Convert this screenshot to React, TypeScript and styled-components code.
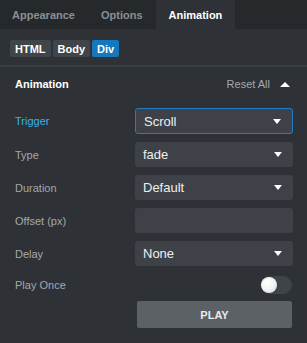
import { useState } from "react";
import styled, { createGlobalStyle } from "styled-components";

const GlobalStyle = createGlobalStyle`
  html, body {
    margin: 0;
    padding: 0;
    background: #2e3236;
  }
  body {
    font-family: "Liberation Sans", Arial, sans-serif;
    width: 307px;
    height: 343px;
    overflow: hidden;
  }
`;

const Panel = styled.div`
  width: 307px;
  height: 343px;
  background: #2e3236;
  color: #e8eaec;
`;

const TabBar = styled.div`
  display: flex;
  height: 29px;
  background: #25292c;
  padding-left: 0;
`;

const Tab = styled.div<{ $active?: boolean }>`
  display: flex;
  align-items: center;
  padding: 0 13px;
  font-size: 11px;
  font-weight: bold;
  color: ${(p) => (p.$active ? "#ffffff" : "#8a8f94")};
  background: ${(p) => (p.$active ? "#2e3236" : "transparent")};
  &:first-child {
    padding-left: 12px;
  }
`;

const Crumbs = styled.div`
  display: flex;
  gap: 2px;
  padding: 11px 10px 0;
  height: 17px;
`;

const Crumb = styled.span<{ $active?: boolean }>`
  display: flex;
  align-items: center;
  padding: 0 5px;
  height: 17px;
  border-radius: 2px;
  font-size: 11px;
  font-weight: bold;
  color: #ffffff;
  background: ${(p) => (p.$active ? "#1577bd" : "#40454a")};
`;

const Divider = styled.div`
  margin-top: 8px;
  height: 2px;
  background: #383d42;
`;

const Section = styled.div`
  padding: 0 14px 0 15px;
`;

const Header = styled.div`
  display: flex;
  align-items: center;
  justify-content: space-between;
  height: 20px;
  margin-top: 7px;
`;

const HeaderTitle = styled.span`
  font-size: 11px;
  font-weight: bold;
  color: #ffffff;
`;

const ResetGroup = styled.div`
  display: flex;
  align-items: center;
  gap: 10px;
  padding-right: 3px;
  font-size: 11px;
  color: #a3a8ad;
`;

const UpArrow = styled.span`
  width: 0;
  height: 0;
  border-left: 5px solid transparent;
  border-right: 5px solid transparent;
  border-bottom: 5px solid #ffffff;
`;

const Rows = styled.div`
  display: flex;
  flex-direction: column;
  gap: 8px;
  margin-top: 14px;
`;

const Row = styled.div`
  display: grid;
  grid-template-columns: 120px 158px;
  align-items: center;
  min-height: 25px;
`;

const Label = styled.label<{ $focus?: boolean }>`
  font-size: 11px;
  color: ${(p) => (p.$focus ? "#38b3e8" : "#a3a8ad")};
`;

const Field = styled.div<{ $focus?: boolean }>`
  box-sizing: border-box;
  display: flex;
  align-items: center;
  justify-content: space-between;
  height: ${(p) => (p.$focus ? "26px" : "25px")};
  padding: 0 11px 0 8px;
  border-radius: 3px;
  background: #3e4248;
  border: ${(p) => (p.$focus ? "1px solid #1e7fc2" : "none")};
  font-size: 13px;
  color: #eceff1;
`;

const DownArrow = styled.span`
  width: 0;
  height: 0;
  border-left: 4px solid transparent;
  border-right: 4px solid transparent;
  border-top: 5px solid #ffffff;
`;

const ToggleRow = styled.div`
  display: grid;
  grid-template-columns: 1fr auto;
  align-items: center;
  height: 18px;
  margin-top: 10px;
  padding-right: 1px;
`;

const Track = styled.div<{ $on: boolean }>`
  position: relative;
  width: 31px;
  height: 18px;
  border-radius: 9px;
  background: ${(p) => (p.$on ? "#1577bd" : "#3f4449")};
  cursor: pointer;
`;

const Knob = styled.span<{ $on: boolean }>`
  position: absolute;
  top: 1px;
  left: ${(p) => (p.$on ? "14px" : "0px")};
  width: 16px;
  height: 16px;
  border-radius: 50%;
  background: radial-gradient(circle at 40% 35%, #ffffff 0%, #f2f2f2 50%, #d4d4d4 100%);
`;

const PlayWrap = styled.div`
  display: flex;
  justify-content: flex-end;
  margin-top: 7px;
  padding-right: 1px;
`;

const PlayButton = styled.button`
  width: 155px;
  height: 27px;
  border: none;
  border-radius: 2px;
  background: #5c6166;
  color: #e8eaec;
  font-family: "Liberation Sans", Arial, sans-serif;
  font-size: 11px;
  font-weight: bold;
  cursor: pointer;
`;

const fields = [
  { label: "Trigger", value: "Scroll", focus: true, select: true },
  { label: "Type", value: "fade", select: true },
  { label: "Duration", value: "Default", select: true },
  { label: "Offset (px)", value: "", select: false },
  { label: "Delay", value: "None", select: true },
];

export default function App() {
  const [playOnce, setPlayOnce] = useState(false);

  return (
    <Panel>
      <GlobalStyle />
      <TabBar>
        <Tab>Appearance</Tab>
        <Tab>Options</Tab>
        <Tab $active>Animation</Tab>
      </TabBar>

      <Crumbs>
        <Crumb>HTML</Crumb>
        <Crumb>Body</Crumb>
        <Crumb $active>Div</Crumb>
      </Crumbs>

      <Divider />

      <Section>
        <Header>
          <HeaderTitle>Animation</HeaderTitle>
          <ResetGroup>
            Reset All
            <UpArrow />
          </ResetGroup>
        </Header>

        <Rows>
          {fields.map((f) => (
            <Row key={f.label}>
              <Label $focus={f.focus}>{f.label}</Label>
              <Field $focus={f.focus}>
                <span>{f.value}</span>
                {f.select && <DownArrow />}
              </Field>
            </Row>
          ))}
        </Rows>

        <ToggleRow>
          <Label>Play Once</Label>
          <Track $on={playOnce} onClick={() => setPlayOnce(!playOnce)}>
            <Knob $on={playOnce} />
          </Track>
        </ToggleRow>

        <PlayWrap>
          <PlayButton>PLAY</PlayButton>
        </PlayWrap>
      </Section>
    </Panel>
  );
}
